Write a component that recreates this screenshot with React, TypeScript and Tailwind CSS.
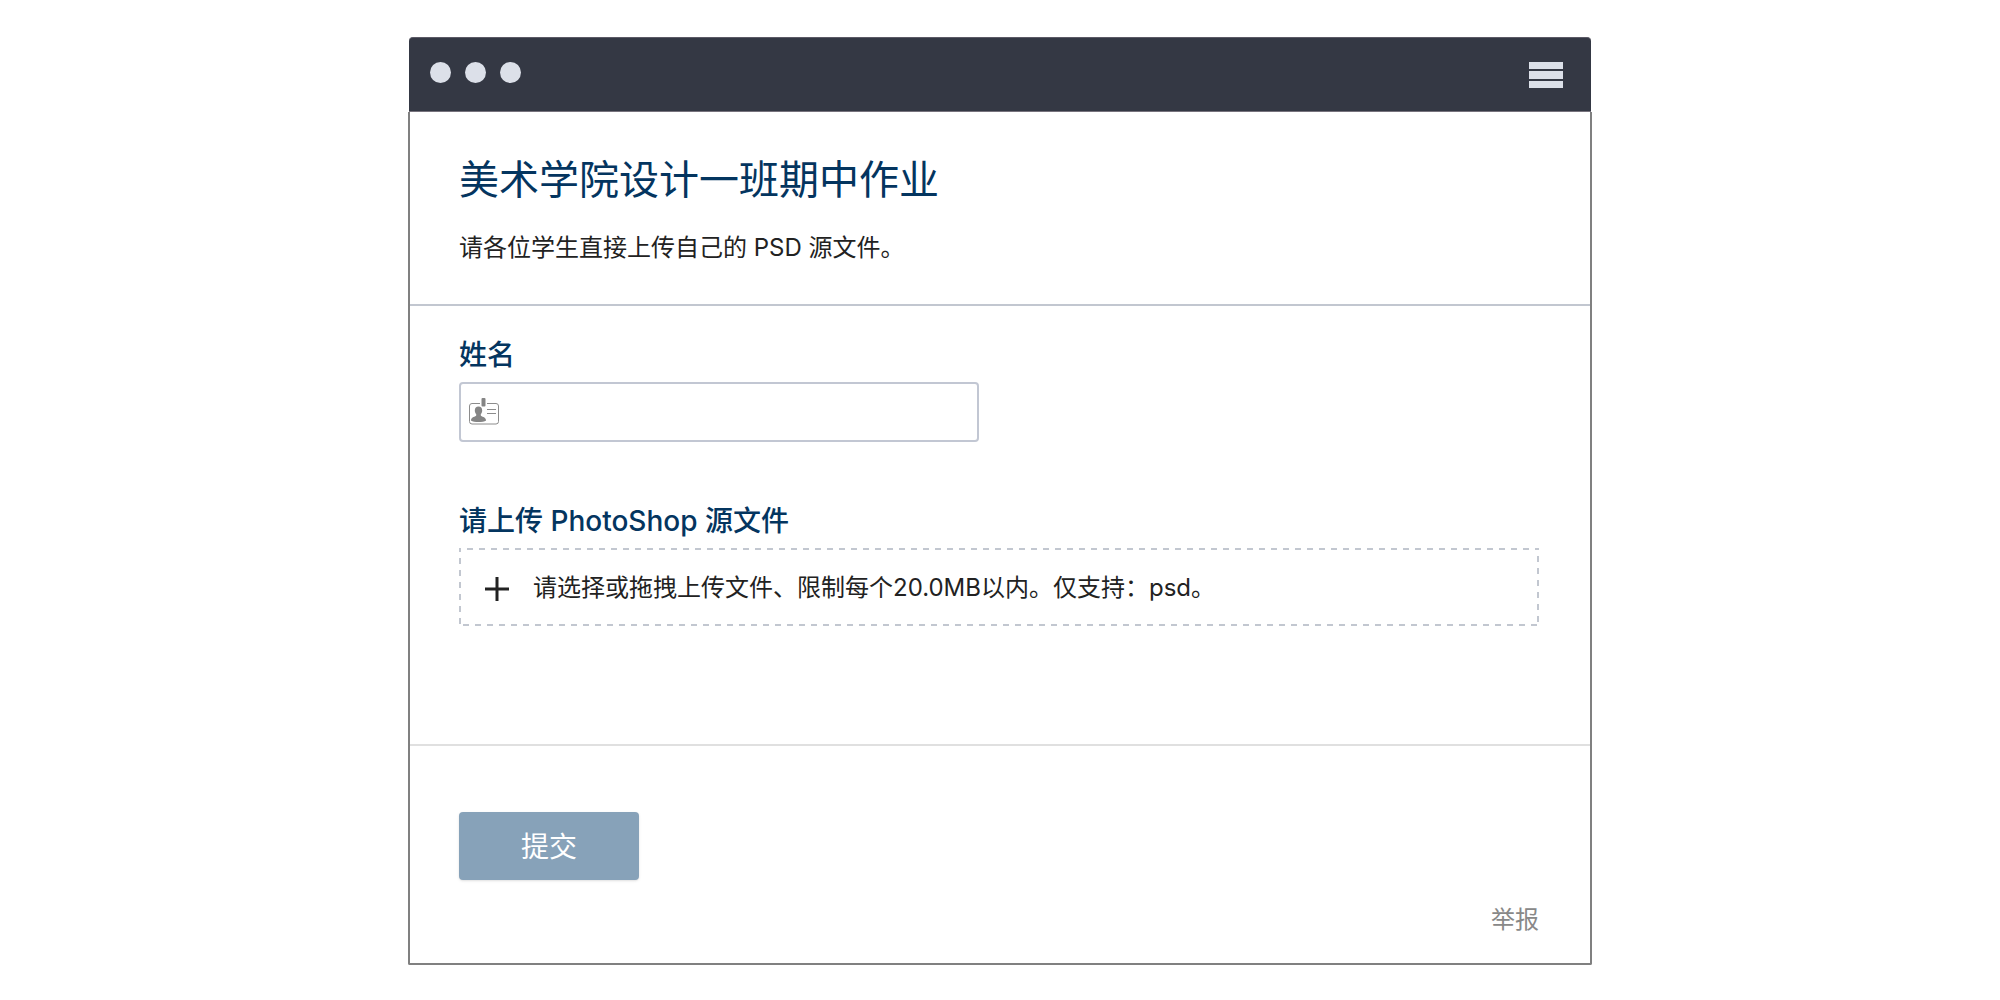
import { useState } from "react";

function NameCardIcon() {
  return (
    <svg
      aria-hidden="true"
      viewBox="0 0 32 28"
      className="pointer-events-none absolute top-1/2 left-2 h-7 w-8 -translate-y-1/2"
    >
      <rect x="2.500" y="5.500" width="29" height="20.5" rx="2.5" fill="none" stroke="#8c8c8c" strokeWidth="1" />
      <rect x="13" y="0" width="7" height="10" fill="#fff" />
      <rect x="14.500" y="0" width="4" height="8.5" rx="1" fill="#858585" />
      <path
        d="M11.500 8.600c2.300 0 3.700 1.600 3.700 3.900 0 1.600-.6 2.800-1.400 3.600v1.500c.5 1.400 5 1.300 5.300 4.800-1.500 1.100-4.500 1.600-7.600 1.600s-6-.5-7.600-1.600c.3-3.500 4.800-3.400 5.300-4.800v-1.500c-.8-.8-1.400-2-1.400-3.600C7.800 10.200 9.200 8.600 11.500 8.600z"
        fill="#858585"
      />
      <path d="M20 11.500h9M20 15.500h9" stroke="#8c8c8c" strokeWidth="1" />
    </svg>
  );
}

function TitleBar() {
  return (
    <header className="mx-px flex h-[75px] items-center justify-between rounded-t border-t border-b border-t-[#5c5a66] border-b-[#77737d] bg-[#343844] pr-7 pl-[21px]">
      <div className="flex gap-3.5 pb-1">
        <span className="size-[21px] rounded-full bg-[#dce0e9]" />
        <span className="size-[21px] rounded-full bg-[#dce0e9]" />
        <span className="size-[21px] rounded-full bg-[#dce0e9]" />
      </div>
      <button type="button" aria-label="菜单" className="flex w-[34px] flex-col gap-0.5 pt-px">
        <span className="h-[7px] w-full bg-[#dce0e9]" />
        <span className="h-2 w-full bg-[#dce0e9]" />
        <span className="h-[7px] w-full bg-[#dce0e9]" />
      </button>
    </header>
  );
}

export default function App() {
  const [name, setName] = useState("");

  return (
    <div
      lang="zh-CN"
      className="min-h-screen bg-white px-4 pt-[37px] pb-[35px] font-['Inter','Noto_Sans_CJK_SC',sans-serif] text-[#222]"
    >
      <div className="mx-auto max-w-[1184px]">
        <TitleBar />
        <form onSubmit={(e) => e.preventDefault()} className="rounded-b-xs border-2 border-t-0 border-[#808080]">
          <div className="border-b-2 border-[#c2c7d0] px-[49px] py-10">
            <h1 className="text-[40px] leading-[56px] text-[#04355f]">美术学院设计一班期中作业</h1>
            <p className="mt-6 text-2xl leading-8">请各位学生直接上传自己的 PSD 源文件。</p>
          </div>

          <div className="border-b-2 border-[#e0e0e0] pt-[29px] pr-[51px] pb-[118px] pl-[49px]">
            <label htmlFor="name" className="block text-[28px] leading-10 font-medium text-[#04355f]">
              姓名
            </label>
            <div className="relative mt-[7px] max-w-[520px]">
              <NameCardIcon />
              <input
                id="name"
                type="text"
                value={name}
                onChange={(e) => setName(e.target.value)}
                className="block h-[60px] w-full rounded border-2 border-[#c2c7d3] bg-transparent pr-4 pl-12 text-2xl"
              />
            </div>

            <label htmlFor="upload" className="mt-[59px] block text-[28px] leading-10 font-medium text-[#04355f]">
              请上传 PhotoShop 源文件
            </label>
            <label
              htmlFor="upload"
              className="relative mt-[7px] flex min-h-[78px] cursor-pointer items-center gap-6 px-[26px] pt-0.5"
            >
              <svg aria-hidden="true" className="pointer-events-none absolute inset-0 h-full w-full text-[#c2c7d0]">
                <rect width="100%" height="100%" fill="none" stroke="currentColor" strokeWidth="4" strokeDasharray="6 6" strokeDashoffset="-8" />
              </svg>
              <svg aria-hidden="true" viewBox="0 0 24 24" className="mt-0.5 size-6 shrink-0">
                <path d="M0 12h24M12 0v24" stroke="#222" strokeWidth="3" />
              </svg>
              <span className="text-2xl leading-8">请选择或拖拽上传文件、限制每个20.0MB以内。仅支持：psd。</span>
              <input id="upload" type="file" accept=".psd" className="sr-only" />
            </label>
          </div>

          <div className="flex flex-col pt-[66px] pr-[51px] pb-[27px] pl-[49px]">
            <button
              type="submit"
              className="h-[68px] w-[180px] rounded bg-[#87a2b9] pt-0.5 text-[28px] leading-10 text-white shadow-sm"
            >
              提交
            </button>
            <a href="#report" className="mt-6 self-end text-2xl leading-8 text-[#888]">
              举报
            </a>
          </div>
        </form>
      </div>
    </div>
  );
}
